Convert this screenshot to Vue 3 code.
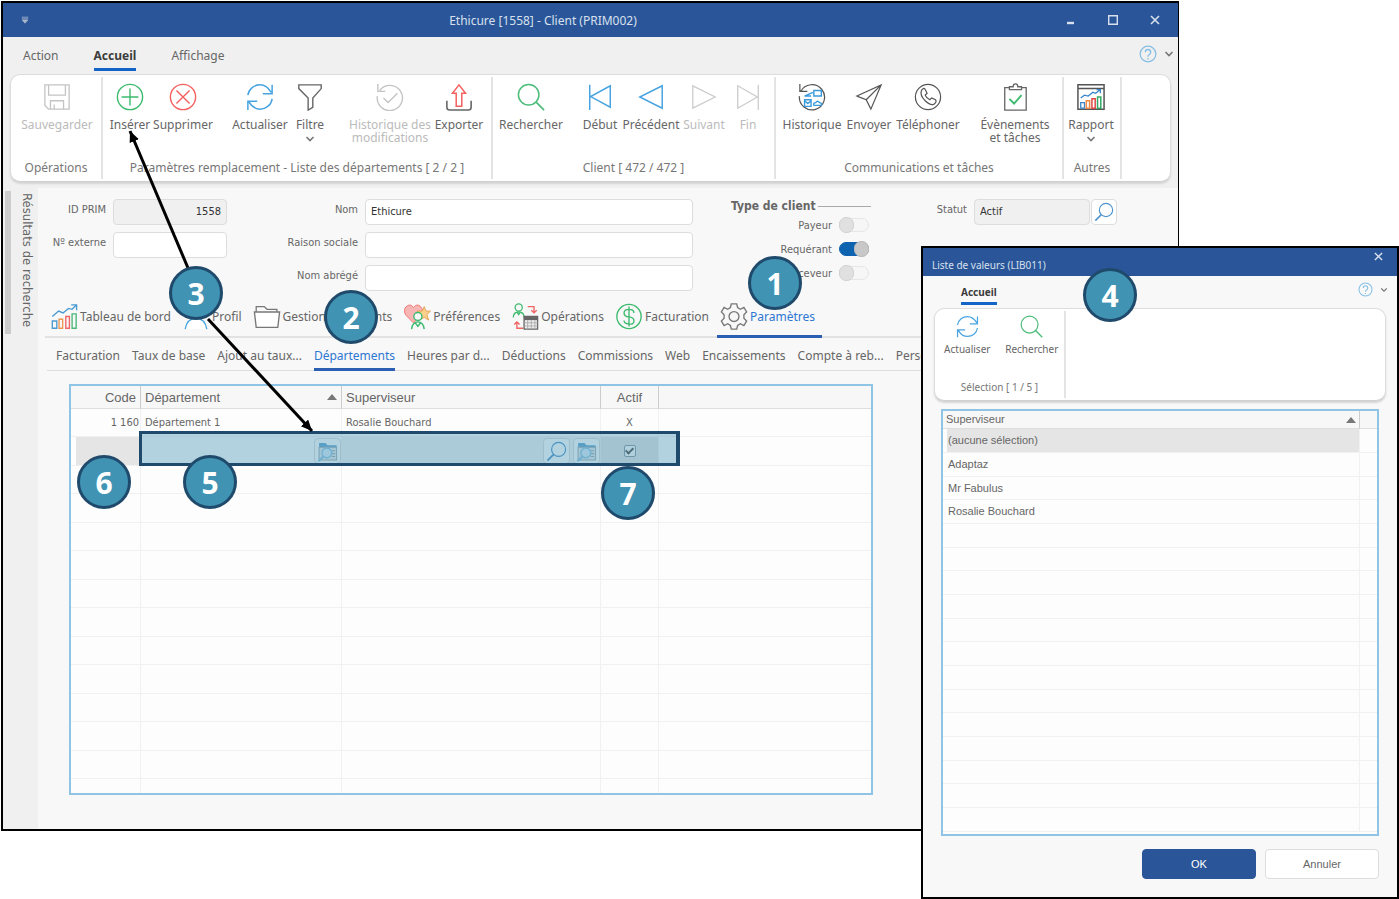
<script setup>
import { ref } from 'vue'

const menuTabs = ['Action', 'Accueil', 'Affichage']

const ribbon = [
  { caption: 'Opérations', width: 92, tools: [{ label: ['Sauvegarder'], icon: 'save', width: 82, off: true }] },
  {
    caption: 'Paramètres remplacement - Liste des départements [ 2 / 2 ]',
    width: 390,
    tools: [
      { label: ['Insérer'], icon: 'add', width: 44 },
      { label: ['Supprimer'], icon: 'remove', width: 62 },
      { label: ['Actualiser'], icon: 'refresh', width: 60, gap: true },
      { label: ['Filtre'], icon: 'filter', width: 40, menu: true },
      { label: ['Historique des', 'modifications'], icon: 'history', width: 88, gap: true, off: true },
      { label: ['Exporter'], icon: 'export', width: 50 },
    ],
  },
  {
    caption: 'Client [ 472 / 472 ]',
    width: 283,
    tools: [
      { label: ['Rechercher'], icon: 'search', width: 66 },
      { label: ['Début'], icon: 'first', width: 40, gap: true },
      { label: ['Précédent'], icon: 'prev', width: 62 },
      { label: ['Suivant'], icon: 'next', width: 44, off: true },
      { label: ['Fin'], icon: 'last', width: 44, off: true },
    ],
  },
  {
    caption: 'Communications et tâches',
    width: 288,
    tools: [
      { label: ['Historique'], icon: 'comms', width: 62 },
      { label: ['Envoyer'], icon: 'send', width: 52 },
      { label: ['Téléphoner'], icon: 'phone', width: 66 },
      { label: ['Évènements', 'et tâches'], icon: 'tasks', width: 76, gap: true },
    ],
  },
  { caption: 'Autres', width: 58, tools: [{ label: ['Rapport'], icon: 'report', width: 44, menu: true }] },
]

const mainTabs = [
  { label: 'Tableau de bord', icon: 'chart' },
  { label: 'Profil', icon: 'person' },
  { label: 'Gestion documents', icon: 'folder' },
  { label: 'Préférences', icon: 'heart' },
  { label: 'Opérations', icon: 'ops' },
  { label: 'Facturation', icon: 'dollar' },
  { label: 'Paramètres', icon: 'gear' },
]
const subTabs = [
  'Facturation', 'Taux de base', 'Ajout au taux...', 'Départements', 'Heures par d...', 'Déductions',
  'Commissions', 'Web', 'Encaissements', 'Compte à reb...', 'Perso...',
]

const clientId = ref('1558')
const externalId = ref('')
const nom = ref('Ethicure')
const raison = ref('')
const abrege = ref('')
const statut = ref('Actif')
const types = ref([
  { id: 'payeur', label: 'Payeur', on: false },
  { id: 'requerant', label: 'Requérant', on: true },
  { id: 'receveur', label: 'Receveur', on: false },
])
const rowActive = ref(true)

const supervisors = ['(aucune sélection)', 'Adaptaz', 'Mr Fabulus', 'Rosalie Bouchard']

const callouts = [
  { n: 1, x: 775, y: 283 },
  { n: 2, x: 351, y: 317 },
  { n: 3, x: 196, y: 293 },
  { n: 4, x: 1110, y: 295 },
  { n: 5, x: 210, y: 482 },
  { n: 6, x: 104, y: 482 },
  { n: 7, x: 628, y: 493 },
]
</script>

<template>
  <div class="scene">
    <svg class="sprite" aria-hidden="true">
      <symbol id="i-save" viewBox="0 0 30 30"><path d="M2 2h26v26H6l-4-4zM6 2v11h18V2M8 28v-9h14v9M12 23v5" fill="none" stroke="#c4c4c4" stroke-width="1.4" /></symbol>
      <symbol id="i-add" viewBox="0 0 30 30"><g fill="none" stroke="#3dba6e" stroke-width="1.5"><circle cx="15" cy="15" r="13.5" /><path d="M15 6v18M6 15h18" /></g></symbol>
      <symbol id="i-remove" viewBox="0 0 30 30"><g fill="none" stroke="#f4605f" stroke-width="1.5"><circle cx="15" cy="15" r="13.5" /><path d="M8 8l14 14M22 8L8 22" /></g></symbol>
      <symbol id="i-refresh" viewBox="0 0 30 30"><path d="M2 13C3 6 9 2 15 2c5 0 9 3 12 8M28 2v9.500H18M28 17c-1 7-7 11-13 11-5 0-9-3-12-8M2 29v-9.500h10" fill="none" stroke="#48a4e0" stroke-width="1.6" /></symbol>
      <symbol id="i-filter" viewBox="0 0 30 30"><path d="M3 2h24v4L18 16v10l-5 3V16L3 6z" fill="none" stroke="#666" stroke-width="1.5" /></symbol>
      <symbol id="i-history" viewBox="0 0 30 30"><path d="M4 8a13.500 13.500 0 1 1-2.500 6M2 1v8h8M8 16l5 5 10-10" fill="none" stroke="#c4c4c4" stroke-width="1.5" /></symbol>
      <symbol id="i-export" viewBox="0 0 30 30"><path d="M15 2l7 9h-4v14h-6V11H8z" fill="none" stroke="#f4605f" stroke-width="1.6" /><path d="M2 19v7q0 3 3 3h20q3 0 3-3v-7" fill="none" stroke="#666" stroke-width="1.7" /></symbol>
      <symbol id="i-search" viewBox="0 0 30 30"><path d="M20 20l9 9" stroke="#4cbd7a" stroke-width="1.8" /><circle cx="12.500" cy="12.500" r="11" fill="none" stroke="#4cbd7a" stroke-width="1.6" /></symbol>
      <symbol id="i-lens" viewBox="0 0 30 30"><path d="M11 19L2 28" stroke="#5094cc" stroke-width="2.400" /><circle cx="18" cy="12" r="10" fill="none" stroke="#5094cc" stroke-width="1.7" /></symbol>
      <symbol id="i-first" viewBox="0 0 30 30"><path d="M4 2v27M26 3v23L5 14.500z" fill="none" stroke="#48a4e0" stroke-width="1.6" /></symbol>
      <symbol id="i-prev" viewBox="0 0 30 30"><path d="M27 3v24L3 15z" fill="none" stroke="#48a4e0" stroke-width="1.6" /></symbol>
      <symbol id="i-next" viewBox="0 0 30 30"><path d="M3 3v24l24-12z" fill="none" stroke="#ccc" stroke-width="1.4" /></symbol>
      <symbol id="i-last" viewBox="0 0 30 30"><path d="M26 2v27M4 3v24l21-12z" fill="none" stroke="#ccc" stroke-width="1.4" /></symbol>
      <symbol id="i-comms" viewBox="0 0 30 30"><path d="M3 9a13.500 13.500 0 1 1-1.500 5M2 1v8h8" fill="none" stroke="#555" stroke-width="1.3" /><path d="M17 8h8v6h-8zM16 10l-9 4h7M7 18h7v7H7zM7 19l3.500 3 3.500-3M17 24q-1-3 2-3 2-3 4 0 3 0 2 3z" fill="none" stroke="#3b9adb" stroke-width="1.5" /></symbol>
      <symbol id="i-send" viewBox="0 0 30 30"><path d="M2 14L28 2 17 28l-5-10zM12 18L28 2M2 14l10 4" fill="none" stroke="#555" stroke-width="1.3" /></symbol>
      <symbol id="i-phone" viewBox="0 0 30 30"><g fill="none" stroke="#555" stroke-width="1.3"><circle cx="15" cy="15" r="13.500" /><path d="M8 8q3-4 4-1l2 4-2 2q1 3 5 5l2-2 4 2q2 2-2 5-4 1-9-4-6-6-4-11z" /></g></symbol>
      <symbol id="i-tasks" viewBox="0 0 30 30"><path d="M9 5H4v24h23V5h-5M9 7V4h4q0-3 2.500-3T18 4h4v3z" fill="none" stroke="#666" stroke-width="1.4" /><path d="M9 17l5 5 8-9" fill="none" stroke="#3dba6e" stroke-width="2" /></symbol>
      <symbol id="i-report" viewBox="0 0 30 30"><path d="M1 2h28v26H1zM1 6h28" fill="none" stroke="#555" stroke-width="1.6" /><path d="M4 16l4-3 4 1 5-4 3 1 5-4M21 7h4v4M4 21h4v6H4z" fill="none" stroke="#3b86c8" stroke-width="1.4" /><path d="M10 19h3.500v8H10z" fill="none" stroke="#ec8a44" stroke-width="1.6" /><path d="M16 17h3.500v10H16z" fill="none" stroke="#e24747" stroke-width="1.6" /><path d="M22 15h3.500v12H22z" fill="none" stroke="#33a966" stroke-width="1.6" /></symbol>
      <symbol id="i-chart" viewBox="0 0 30 30"><path d="M2 15l7-6 5 2 6-5 4 1 5-5M23 2h6v6M2 20h5v8H2z" fill="none" stroke="#4a9ad2" stroke-width="1.5" /><path d="M9.500 18h4v10h-4z" fill="none" stroke="#ee9650" stroke-width="1.5" /><path d="M17 15h4v13h-4z" fill="none" stroke="#f06464" stroke-width="1.5" /><path d="M24 12h4.500v16H24z" fill="none" stroke="#49b878" stroke-width="1.5" /></symbol>
      <symbol id="i-person" viewBox="0 0 30 30"><circle cx="15" cy="9" r="7" fill="#fff" stroke="#48a4e0" stroke-width="1.5" /><path d="M3 29q2-12 12-12t12 12" fill="#fff" stroke="#48a4e0" stroke-width="1.5" /></symbol>
      <symbol id="i-folder" viewBox="0 0 30 30"><path d="M3 10V4h9l3 3h11v4" fill="none" stroke="#777" stroke-width="1.400" /><path d="M1 10h28l-2 17H3z" fill="#fff" stroke="#777" stroke-width="1.500" /></symbol>
      <symbol id="i-heart" viewBox="0 0 30 30"><path d="M11 22L3 14Q-1 8 3 4q5-4 8 1 4-5 8-1 4 4 0 10z" fill="#f9b4b4" stroke="#ee7070" /><path d="M23 4l2 5h5l-4 4 2 6-5-3-5 3 1-6-4-4h6z" fill="#fdd08e" stroke="#e5a04f" /><circle cx="16" cy="15" r="4.500" fill="#f8f8f8" stroke="#3dba6e" stroke-width="1.600" /><path d="M9 29q1-8 7-8t7 8M13 22l3 4 3-4" fill="none" stroke="#3dba6e" stroke-width="1.600" /></symbol>
      <symbol id="i-ops" viewBox="0 0 30 30"><g fill="none" stroke="#3dba6e" stroke-width="1.4"><circle cx="8" cy="5" r="4" /><path d="M2 16q0-6 6-6t6 6M6 10l2 3 2-3" /></g><path d="M18 4h7v6M22 8l3 3 3-3M13 28H6v-7M3 24l3-3 3 3" fill="none" stroke="#f06464" stroke-width="1.500" /><path d="M14 15h15v14H14z" fill="#eee" stroke="#666" stroke-width="1.500" /><path d="M14 17h15" stroke="#666" stroke-width="4" /><path d="M18 19v10M22 19v10M26 19v10M14 22h15M14 25.500h15" stroke="#aaa" /></symbol>
      <symbol id="i-dollar" viewBox="0 0 30 30"><g fill="none" stroke="#3dba6e" stroke-width="1.5"><circle cx="15" cy="15" r="13.500" /><path d="M20.500 11q0-4-5.500-4t-5.500 4 5.500 4.500 5.500 4.500-5.500 3.500-5.500-4M15 4v22" /></g></symbol>
      <symbol id="i-gear" viewBox="0 0 30 30"><g fill="none" stroke="#777" stroke-width="1.500"><circle cx="15" cy="15" r="5.500" /><path d="M11 5l1-4h6l1 4 3 2 4-2 3 5-3 3v4l3 3-3 5-4-2-3 2-1 4h-6l-1-4-3-2-4 2-3-5 3-3v-4l-3-3 3-5 4 2z" /></g></symbol>
      <symbol id="i-browse" viewBox="0 0 30 30"><path d="M3 3h9l3 3h13v5H3z" fill="#68a9d6" /><path d="M3 9h25v18H3z" fill="#e6eaec" stroke="#a3aeb6" stroke-width="1.5" /><path d="M21 14h5M21 18h5M21 22h5" stroke="#a3aeb6" stroke-width="1.500" /><circle cx="14" cy="17" r="7" fill="#d9ecf8" stroke="#93c5e6" stroke-width="2" /><path d="M9 22l-7 7" stroke="#93c5e6" stroke-width="3" /></symbol>
      <symbol id="i-help" viewBox="0 0 20 20"><circle cx="10" cy="10" r="8.700" fill="none" stroke="#86bfe4" stroke-width="1.400" /><path d="M7 8q0-3 3-3t3 3q0 1.500-1.500 2.500T10 13M10 14.500v1.500" fill="none" stroke="#86bfe4" stroke-width="1.500" /></symbol>
      <symbol id="i-chevron" viewBox="0 0 10 10"><path d="M1.500 3L5 6.500 8.500 3" fill="none" stroke="#777" stroke-width="1.600" /></symbol>
      <symbol id="i-sort" viewBox="0 0 10 6"><path d="M0 6L5 0l5 6z" fill="#777" /></symbol>
      <symbol id="i-close" viewBox="0 0 10 10"><path d="M1 1l8 8M9 1L1 9" fill="none" stroke="#d8e0ee" stroke-width="1.600" /></symbol>
    </svg>

    <main class="window">
      <header class="titlebar">
        <button class="quick" aria-label="Accès rapide">
          <svg viewBox="0 0 10 10"><path d="M1 1.500h8M1 3.500h8M1.500 5L5 9l3.500-4z" fill="#aab6cc" stroke="#aab6cc" /></svg>
        </button>
        <h1>Ethicure [1558] - Client (PRIM002)</h1>
        <button aria-label="Réduire"><svg viewBox="0 0 10 10"><path d="M1 8h7" stroke="#d8e0ee" stroke-width="2.400" /></svg></button>
        <button aria-label="Agrandir"><svg viewBox="0 0 10 10"><path d="M.7.7h8.600v8.600H.7z" fill="none" stroke="#d8e0ee" stroke-width="1.400" /></svg></button>
        <button aria-label="Fermer"><svg><use href="#i-close" /></svg></button>
      </header>

      <nav class="menu">
        <button v-for="m in menuTabs" :key="m" :class="{ active: m === 'Accueil' }">{{ m }}</button>
        <span class="spacer"></span>
        <button class="help" aria-label="Aide"><svg><use href="#i-help" /></svg></button>
        <button class="fold" aria-label="Réduire le ruban"><svg><use href="#i-chevron" /></svg></button>
      </nav>

      <section class="ribbon">
        <div v-for="g in ribbon" :key="g.caption" class="group" :style="{ width: g.width + 'px' }">
          <div class="tools">
            <button
              v-for="t in g.tools" :key="t.label[0]" class="tool" :class="{ off: t.off, gap: t.gap }"
              :style="{ width: t.width + 'px' }" :disabled="t.off"
            >
              <svg class="tool-icon"><use :href="'#i-' + t.icon" /></svg>
              <span v-for="l in t.label" :key="l">{{ l }}</span>
              <svg v-if="t.menu" class="caret"><use href="#i-chevron" /></svg>
            </button>
          </div>
          <p>{{ g.caption }}</p>
        </div>
      </section>

      <div class="body">
        <aside><span class="grip"></span><span class="side-label">Résultats de recherche</span></aside>
        <div class="content">
          <form class="form" @submit.prevent>
            <div class="col ids">
              <label for="idprim">ID PRIM</label><input id="idprim" v-model="clientId" class="num" readonly />
              <label for="ext">Nº externe</label><input id="ext" v-model="externalId" />
            </div>
            <div class="col names">
              <label for="nom">Nom</label><input id="nom" v-model="nom" />
              <label for="raison">Raison sociale</label><input id="raison" v-model="raison" />
              <label for="abrege">Nom abrégé</label><input id="abrege" v-model="abrege" />
            </div>
            <div class="types" role="group" aria-label="Type de client">
              <strong>Type de client</strong>
              <label v-for="t in types" :key="t.id" :for="t.id">{{ t.label }}<input :id="t.id" v-model="t.on" type="checkbox" /></label>
            </div>
            <div class="status">
              <label for="statut">Statut</label><input id="statut" v-model="statut" readonly />
              <button class="lens" aria-label="Chercher un statut"><svg><use href="#i-lens" /></svg></button>
            </div>
          </form>

          <nav class="tabs">
            <button v-for="t in mainTabs" :key="t.label" :class="{ active: t.label === 'Paramètres' }">
              <svg><use :href="'#i-' + t.icon" /></svg>{{ t.label }}
            </button>
          </nav>
          <nav class="subtabs">
            <button v-for="t in subTabs" :key="t" :class="{ active: t === 'Départements' }">{{ t }}</button>
          </nav>

          <div class="sheet">
            <table class="grid">
              <colgroup><col class="c-code" /><col class="c-dep" /><col class="c-sup" /><col class="c-act" /><col /></colgroup>
              <thead>
                <tr>
                  <th class="right">Code</th>
                  <th><span class="sortable">Département<svg><use href="#i-sort" /></svg></span></th>
                  <th>Superviseur</th><th class="center">Actif</th><th></th>
                </tr>
              </thead>
              <tbody>
                <tr><td class="right">1 160</td><td>Département 1</td><td>Rosalie Bouchard</td><td class="center">X</td><td></td></tr>
                <tr class="editing">
                  <td class="locked"></td>
                  <td><span class="pickers"><button aria-label="Parcourir les départements"><svg><use href="#i-browse" /></svg></button></span></td>
                  <td class="tint">
                    <span class="pickers">
                      <button aria-label="Chercher un superviseur"><svg><use href="#i-lens" /></svg></button>
                      <button aria-label="Parcourir les superviseurs"><svg><use href="#i-browse" /></svg></button>
                    </span>
                  </td>
                  <td class="shade"><input v-model="rowActive" type="checkbox" aria-label="Actif" /></td>
                  <td></td>
                </tr>
                <tr v-for="i in 12" :key="i"><td v-for="c in 5" :key="c"></td></tr>
              </tbody>
            </table>
            <div class="highlight"></div>
          </div>
        </div>
      </div>
    </main>

    <section class="dialog" role="dialog" aria-label="Liste de valeurs">
      <header>
        <h2>Liste de valeurs (LIB011)</h2>
        <button aria-label="Fermer la liste"><svg><use href="#i-close" /></svg></button>
      </header>
      <nav class="menu">
        <button class="active">Accueil</button>
        <span class="spacer"></span>
        <button class="help" aria-label="Aide"><svg><use href="#i-help" /></svg></button>
        <button class="fold" aria-label="Réduire le ruban"><svg><use href="#i-chevron" /></svg></button>
      </nav>
      <div class="ribbon">
        <div class="group">
          <div class="tools">
            <button class="tool"><svg class="tool-icon"><use href="#i-refresh" /></svg><span>Actualiser</span></button>
            <button class="tool"><svg class="tool-icon"><use href="#i-search" /></svg><span>Rechercher</span></button>
          </div>
          <p>Sélection [ 1 / 5 ]</p>
        </div>
      </div>
      <div class="list">
        <table>
          <colgroup><col /><col class="c-end" /></colgroup>
          <thead><tr><th><span class="sortable">Superviseur<svg><use href="#i-sort" /></svg></span></th><th></th></tr></thead>
          <tbody>
            <tr v-for="i in 17" :key="i" :class="{ selected: i === 1 }"><td>{{ supervisors[i - 1] }}</td><td></td></tr>
          </tbody>
        </table>
      </div>
      <footer><button class="ok">OK</button><button>Annuler</button></footer>
    </section>

    <svg class="arrows" aria-hidden="true">
      <defs>
        <marker id="head" markerUnits="userSpaceOnUse" markerWidth="12" markerHeight="12" refX="11" refY="5" orient="auto">
          <path d="M0 0l11 5-11 5z" />
        </marker>
      </defs>
      <path d="M188 268L130 131" marker-end="url(#head)" />
      <path d="M208 319L312 431" marker-end="url(#head)" />
    </svg>
    <span v-for="c in callouts" :key="c.n" class="callout" :style="{ left: c.x + 'px', top: c.y + 'px' }">{{ c.n }}</span>
  </div>
</template>

<style>
body { margin: 0; background: #fff; }
</style>

<style scoped>
.scene {
  position: relative;
  min-height: 100vh;
  overflow: hidden;
  font-family: "Noto Sans", "Open Sans", sans-serif;
  font-size: 12px;
  line-height: 13px;
  color: #666;
}
.scene * { box-sizing: border-box; }
.sprite { position: absolute; width: 0; height: 0; }
button { font: inherit; color: inherit; background: none; border: 0; padding: 0; }
h1, h2, p { margin: 0; font: inherit; }
svg { display: block; flex: none; }
.spacer { flex: 1; }

.window {
  margin: 1px 220px 0 1px;
  border: solid #000;
  border-width: 2px 1px 2px 2px;
  background: #f0f0f0;
}
.titlebar { display: flex; align-items: center; height: 34px; padding-right: 2px; background: #2a5699; color: #d8e0ee; }
.titlebar h1 { flex: 1; text-align: center; }
.titlebar button { width: 42px; display: grid; place-items: center; }
.titlebar .quick { width: 33px; padding-left: 10px; }
.titlebar svg { width: 10px; height: 10px; }
.titlebar .quick svg { width: 8px; height: 8px; }

.menu { display: flex; align-items: flex-start; gap: 35px; height: 37px; padding: 12px 4px 0 20px; }
.menu button { padding-bottom: 5px; border-bottom: 3px solid transparent; line-height: 14px; }
.menu .active { font-weight: 700; color: #3c3c3c; border-color: #1464c8; }
.menu .help, .menu .fold { padding: 0; border: 0; }
.menu .help { margin: -4px -28px 0 0; }
.menu .help svg { width: 18px; height: 18px; margin-top: 0; }
.menu .fold svg { width: 10px; height: 10px; }

.ribbon {
  display: flex;
  margin: 0 7px;
  height: 108px;
  padding: 2px 0;
  background: #fff;
  border: 1px solid #ddd;
  border-bottom-color: #d0d0d0;
  border-radius: 10px;
  box-shadow: 0 2px 2px #d4d4d4;
}
.group { display: flex; flex-direction: column; border-right: 2px solid #e4e4e4; }
.tools { display: flex; flex: 1; padding: 6px 0 0 5px; }
.tool { display: flex; flex-direction: column; align-items: center; white-space: nowrap; }
.tool.gap { margin-left: 16px; }
.tool-icon { width: 28px; height: 28px; margin-bottom: 7px; }
.tool.off { color: #bbb; }
.caret { width: 10px; height: 10px; margin-top: 3px; }
.group p { text-align: center; padding-bottom: 5px; color: #777; white-space: nowrap; }

.body { display: flex; padding-top: 6px; }
aside { display: flex; gap: 6px; width: 35px; padding: 3px 0 0 2px; }
.grip { width: 6px; height: 143px; background: #ccc; }
.side-label { writing-mode: vertical-rl; line-height: 20px; font-family: "DejaVu Sans Condensed", "DejaVu Sans", sans-serif; font-size: 13px; padding-top: 2px; }
.content { flex: 1; min-width: 0; background: #f8f8f8; padding-bottom: 34px; }

.form { display: flex; height: 108px; padding-top: 11px; font-family: "DejaVu Sans Condensed", "DejaVu Sans", sans-serif; font-size: 11px; }
.col { display: grid; gap: 7px; align-content: start; }
.ids { grid-template-columns: 68px 114px; }
.names { flex: 1; grid-template-columns: 131px 1fr; }
.col label, .status label { text-align: right; padding-top: 4px; }
.form input:not([type]) {
  width: 100%; height: 26px; padding: 0 5px 2px; font: inherit; color: #333; background: #fff;
  border: 1px solid #ddd; border-radius: 4px; min-width: 0;
}
.form input[readonly] { background: #f0f0f0 !important; }
.form .num { text-align: right; }
.types { width: 140px; margin: 0 65px 0 38px; display: flex; flex-direction: column; }
.types strong { display: flex; align-items: center; gap: 2px; height: 14px; font-size: 12px; white-space: nowrap; }
.types strong::after { content: ""; flex: 1; height: 1px; background: #aaa; }
.types label { display: flex; justify-content: flex-end; align-items: center; gap: 7px; height: 24px; padding-right: 2px; }
.types input { appearance: none; margin: 0; width: 30px; height: 14px; border: 1px solid #e6e6e6; border-radius: 7px; background: #f6f6f6; display: flex; align-items: center; }
.types input::before { content: ""; width: 13px; height: 14px; border-radius: 7px; background: #e0e0e0; border: 1px solid #d2d2d2; margin-left: -1px; }
.types input:checked { background: #0d63b0; justify-content: flex-end; border-color: #0d63b0; }
.types input:checked::before { background: #c8c8c8; border-color: #bbb; margin: 0 -1px 0 0; }
.status { display: grid; grid-template-columns: 31px 116px 26px; column-gap: 7px; align-items: start; align-content: start; margin-right: 62px; width: 180px; }
.status .lens { width: 26px; height: 26px; margin-left: -6px; border: 1px solid #ddd; border-radius: 4px; background: #fff; display: grid; place-items: center; }
.lens svg { width: 20px; height: 20px; }

.tabs, .subtabs { display: flex; white-space: nowrap; overflow: hidden; }
.tabs { gap: 11px; height: 42px; margin-left: 7px; padding-left: 5px; box-shadow: inset 0 -2px #e2e2e2; }
.tabs button { display: flex; align-items: center; gap: 2px; padding-bottom: 1px; position: relative; }
.tabs svg { width: 28px; height: 27px; }
.tabs .active, .subtabs .active { color: #2d77d2; }
.tabs .active::after { content: ""; position: absolute; left: -3px; right: -7px; bottom: 0; height: 3px; background: #2a5fb4; }
.subtabs { gap: 12px; height: 33px; margin-left: 9px; padding-left: 9px; box-shadow: inset 0 -1px #ddd; }
.subtabs button { padding-top: 4px; border-bottom: 3px solid transparent; }
.subtabs .active { border-color: #2a5fb4; }

.sheet { position: relative; width: 804px; margin: 13px 0 0 31px; border: 2px solid #8fc4e4; background: #fdfdfd; }
table { width: 100%; table-layout: fixed; border-collapse: separate; border-spacing: 0; }
th, td { padding: 0 3px; font-weight: 400; text-align: left; border: solid #f1f1f1; border-width: 0 1px 1px 0; white-space: nowrap; }
th { background: #f7f7f7; border-color: #ccc; border-bottom-color: #ddd; }
th:last-child, td:last-child { border-right: 0; }
.c-code { width: 70px; }
.c-dep { width: 201px; }
.c-sup { width: 259px; }
.c-act { width: 58px; }
.grid th { height: 23px; padding: 0 4px; font-family: "Liberation Sans", Arial, sans-serif; font-size: 13px; }
.grid td { height: 28px; font-family: "DejaVu Sans Condensed", "DejaVu Sans", sans-serif; font-size: 11px; padding: 0 4px; }
.grid tr:nth-child(even) td { height: 29px; }
.grid tr:last-child td { height: 14px; border-bottom: 0; }
.grid .right { text-align: right; }
.grid td.right { padding-right: 1px; }
.grid .center { text-align: center; }
.sortable { display: flex; align-items: center; justify-content: space-between; }
.sortable svg { width: 10px; height: 6px; }
.grid .editing td { padding: 0; }
.locked { background: linear-gradient(#e5e5e5, #e5e5e5) 5px 0 no-repeat; }
.tint { background: #f2f2f2; }
.shade { background: #e5e5e5; text-align: center; }
.shade input { appearance: none; display: block; width: 12px; height: 12px; margin: 0 auto; border: 1px solid #8c9ba5; border-radius: 2px; background: #fafafa; }
.shade input:checked::before { content: ""; display: block; width: 3px; height: 6px; margin: 0 auto; border: solid #555; border-width: 0 2px 2px 0; transform: rotate(45deg); }
.pickers { display: flex; justify-content: flex-end; gap: 3px; }
.pickers button { width: 27px; height: 26px; border: 1px solid #ddd; border-radius: 4px; background: #fdfdfd; display: grid; place-items: center; }
.pickers svg { width: 21px; height: 21px; }
.highlight { position: absolute; left: 68px; top: 45px; width: 541px; height: 35px; border: 3px solid #1f4a6b; border-right-width: 4px; background: rgba(64, 145, 178, 0.4); }

.dialog {
  position: absolute; right: 0; top: 246px; width: 478px;
  border: 2px solid #000; background: #f8f8f8; font-size: 10px;
}
.dialog header { display: flex; justify-content: space-between; height: 28px; padding: 11px 14px 0 9px; background: #2a5699; color: #d8e0ee; }
.dialog header button { height: 9px; margin-top: -7px; }
.dialog header svg { width: 9px; height: 9px; }
.dialog .menu { height: 32px; padding: 10px 9px 0 38px; }
.dialog .menu .active { padding-bottom: 3px; line-height: 13px; }
.dialog .menu .help svg { width: 15px; height: 15px; }
.dialog .menu .fold svg { width: 8px; height: 8px; }
.dialog .ribbon { height: 93px; margin: 0 11px; }
.dialog .group { width: 131px; }
.dialog .tools { padding: 4px 0 0; }
.dialog .tool { width: 65px; }
.dialog .tool-icon { width: 23px; height: 23px; margin-bottom: 5px; }
.dialog .group p { padding-bottom: 4px; }
.list { margin: 8px 18px 0; border: 2px solid #8fc4e4; background: #fdfdfd; font-family: "Liberation Sans", Arial, sans-serif; font-size: 11px; padding-bottom: 2px; }
.c-end { width: 17px; }
.list th { height: 18px; }
.list td { height: 24px; }
.list tr:nth-child(3n) td { height: 23px; }
.list td:first-child { padding-left: 5px; }
.selected td:first-child { background: linear-gradient(#e5e5e5, #e5e5e5) 4px 0 no-repeat; }
footer { display: flex; justify-content: flex-end; gap: 9px; padding: 13px 18px 18px; font-family: "Liberation Sans", Arial, sans-serif; font-size: 11px; }
footer button { width: 114px; height: 30px; border: 1px solid #ddd; border-radius: 4px; background: #fff; }
footer .ok { background: #2a5699; border-color: #2a5699; color: #fff; }

.arrows { position: absolute; inset: 0; width: 100%; height: 100%; pointer-events: none; }
.arrows path { stroke: #000; stroke-width: 3px; fill: none; }
.arrows marker path { stroke: none; fill: #000; }
.callout {
  position: absolute; width: 54px; height: 54px; margin: -27px 0 0 -27px; padding-top: 2px;
  display: grid; place-items: center; border: 3px solid #1f4a6b; border-radius: 50%;
  background: #4093b3; color: #fff; font: 700 30px/30px "Open Sans", "Noto Sans", sans-serif;
}
</style>
